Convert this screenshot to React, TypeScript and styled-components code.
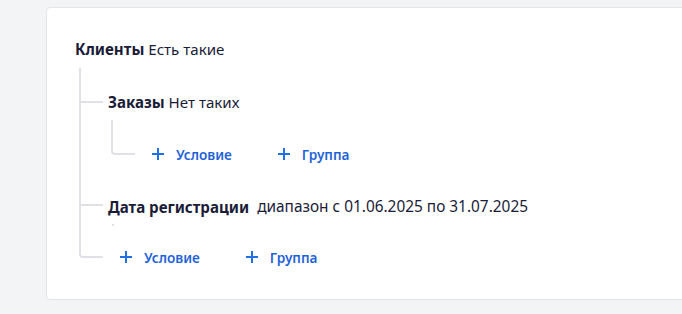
import React from "react";
import styled, { createGlobalStyle } from "styled-components";

const Global = createGlobalStyle`
  html, body { margin: 0; padding: 0; background: #f3f4f6; overflow: hidden; }
  body { font-family: "Noto Sans", "Open Sans", sans-serif; color: #1a1c38; }
`;

const LINE = "#dfe1e6";

const Page = styled.div`
  padding: 7px 0 0 46px;
  height: 314px;
  box-sizing: border-box;
  overflow: hidden;
`;

const Card = styled.div`
  width: 680px;
  height: 293px;
  box-sizing: border-box;
  background: #fff;
  border: 1px solid #e3e5e9;
  border-radius: 4px;
  padding: 31px 0 0 28px;
`;

const Header = styled.div<{ $gap?: number }>`
  display: flex;
  align-items: center;
  height: 20px;
  font-size: 15.1px;
  line-height: 20px;
  white-space: nowrap;
  gap: ${(p) => p.$gap ?? 4}px;
`;

const Label = styled.span`
  font-weight: 700;
`;

const Value = styled.span<{ $size?: number }>`
  font-weight: 400;
  font-size: ${(p) => (p.$size ? `${p.$size}px` : "inherit")};
`;

const Body = styled.div<{ $top: number; $indent: number }>`
  margin-top: ${(p) => p.$top}px;
  margin-left: ${(p) => p.$indent}px;
  display: flex;
  flex-direction: column;
`;

const Item = styled.div<{ $padTop: number; $branch: number; $last?: boolean; $pad: number; $arm: number }>`
  position: relative;
  padding-top: ${(p) => p.$padTop}px;
  padding-left: ${(p) => p.$pad}px;

  &::before {
    content: "";
    position: absolute;
    left: 0;
    top: 0;
    width: ${(p) => p.$arm}px;
    height: ${(p) => p.$branch}px;
    border-left: 2px solid ${LINE};
    border-bottom: 2px solid ${LINE};
    border-bottom-left-radius: ${(p) => (p.$last ? 4 : 0)}px;
    box-sizing: border-box;
  }

  &::after {
    content: "";
    display: ${(p) => (p.$last ? "none" : "block")};
    position: absolute;
    left: 0;
    top: ${(p) => p.$branch - 2}px;
    bottom: 0;
    width: 2px;
    background: ${LINE};
  }
`;

const Stub = styled.div`
  margin: 7px 0 0 4px;
  width: 2px;
  height: 2px;
  background: ${LINE};
`;

const Actions = styled.div`
  display: flex;
  align-items: center;
  height: 28px;
  gap: 46px;
`;

const AddButton = styled.button`
  display: flex;
  align-items: center;
  gap: 12px;
  padding: 0;
  border: none;
  background: none;
  font-family: inherit;
  font-size: 13.6px;
  font-weight: 600;
  color: #1f63d8;
  cursor: pointer;
`;

const Plus = () => (
  <svg width="12" height="12" viewBox="0 0 12 12" fill="none">
    <path d="M6 0v12M0 6h12" stroke="#1f6fe5" strokeWidth="2" />
  </svg>
);

const ActionBar = () => (
  <Actions>
    <AddButton>
      <Plus />
      Условие
    </AddButton>
    <AddButton>
      <Plus />
      Группа
    </AddButton>
  </Actions>
);

export default function App() {
  return (
    <>
      <Global />
      <Page>
        <Card>
          <Header>
            <Label>Клиенты</Label>
            <Value>Есть такие</Value>
          </Header>
          <Body $top={9} $indent={4}>
            <Item $padTop={24} $branch={35} $pad={29} $arm={24}>
              <Header>
                <Label>Заказы</Label>
                <Value>Нет таких</Value>
              </Header>
              <Body $top={8} $indent={3}>
                <Item $padTop={20} $branch={35} $pad={41} $arm={24} $last>
                  <ActionBar />
                </Item>
              </Body>
            </Item>
            <Item $padTop={29} $branch={38} $pad={29} $arm={24}>
              <Header $gap={8}>
                <Label>Дата регистрации</Label>
                <Value $size={15.4}>диапазон с 01.06.2025 по 31.07.2025</Value>
              </Header>
              <Stub />
            </Item>
            <Item $padTop={17} $branch={32} $pad={41} $arm={24} $last>
              <ActionBar />
            </Item>
          </Body>
        </Card>
      </Page>
    </>
  );
}
